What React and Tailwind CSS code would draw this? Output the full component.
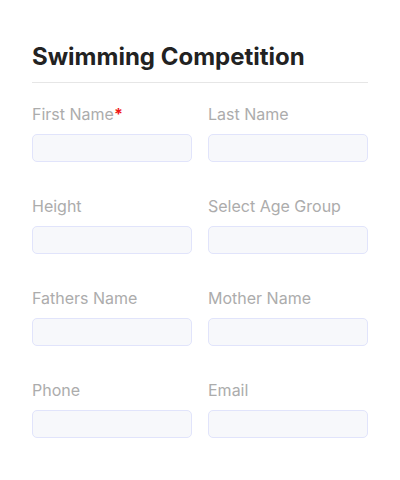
import React from 'react';

const fields = [
    [{ label: 'First Name', required: true }, { label: 'Last Name' }],
    [{ label: 'Height' }, { label: 'Select Age Group' }],
    [{ label: 'Fathers Name' }, { label: 'Mother Name' }],
    [{ label: 'Phone' }, { label: 'Email' }],
];

function Field({ label, required }) {
    return (
        <div className="flex flex-col gap-2">
            <label className="text-base leading-6 text-[#acacac]">
                {label}
                {required && <span className="text-[#f01818] font-bold">*</span>}
            </label>
            <input
                type="text"
                className="h-7 w-full rounded-[5px] border border-[#e1e4fb] bg-[#f7f8fb] px-2 text-sm outline-none"
            />
        </div>
    );
}

export default function App() {
    return (
        <div className="min-h-[480px] bg-white px-8 pt-[41px]" style={{ fontFamily: 'Inter, "Noto Sans", sans-serif' }}>
            <h1 className="text-2xl leading-8 font-bold text-[#222222] pb-[9px] border-b border-[#e6e6e6]">
                Swimming Competition
            </h1>
            <div className="mt-[19px] flex flex-col gap-8">
                {fields.map((row, i) => (
                    <div key={i} className="grid grid-cols-2 gap-4">
                        {row.map((f) => (
                            <Field key={f.label} {...f} />
                        ))}
                    </div>
                ))}
            </div>
        </div>
    );
}
